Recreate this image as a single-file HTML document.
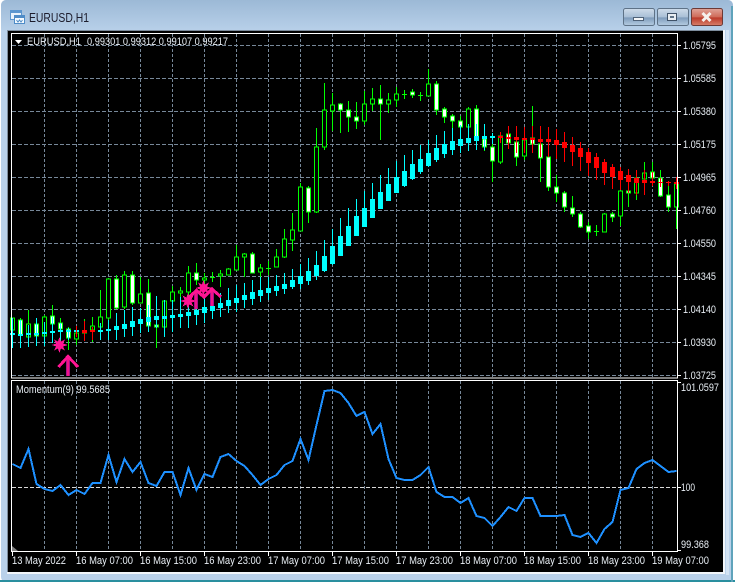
<!DOCTYPE html>
<html><head><meta charset="utf-8"><title>EURUSD,H1</title>
<style>
html,body{margin:0;padding:0;background:#fff;width:735px;height:582px;overflow:hidden}
svg{display:block}
text{font-family:"Liberation Sans",sans-serif;font-size:11px;fill:#e8eef4}
</style></head><body>
<svg width="735" height="582" viewBox="0 0 735 582" xmlns="http://www.w3.org/2000/svg">
<defs>
<linearGradient id="tb" x1="0" y1="0" x2="0" y2="1"><stop offset="0" stop-color="#9cb9d6"/><stop offset="1" stop-color="#b9d1ea"/></linearGradient>
<linearGradient id="btn" x1="0" y1="0" x2="0" y2="1"><stop offset="0" stop-color="#cfdcea"/><stop offset=".5" stop-color="#a9bfd6"/><stop offset=".55" stop-color="#7f9cbb"/><stop offset="1" stop-color="#b5cde2"/></linearGradient>
<linearGradient id="cls" x1="0" y1="0" x2="0" y2="1"><stop offset="0" stop-color="#e0a59a"/><stop offset=".5" stop-color="#cf6a58"/><stop offset=".55" stop-color="#bb3a2a"/><stop offset="1" stop-color="#d8806c"/></linearGradient>
</defs>
<!-- window frame -->
<rect x="0" y="0" width="735" height="582" fill="#ffffff"/>
<rect x="1" y="0" width="732" height="582" rx="5" fill="#b9d1ea"/>
<rect x="1" y="0" width="732" height="32" rx="5" fill="url(#tb)"/>
<rect x="0" y="580" width="735" height="2" fill="#2a8f9f"/>
<rect x="731" y="6" width="2" height="576" fill="#5fa3bb"/>
<rect x="726" y="30" width="3" height="545" fill="#d3e3f3"/>
<rect x="7" y="30" width="718" height="544" fill="#f2f6fa"/>
<rect x="7" y="30" width="716" height="1" fill="#7d8c9c"/>
<rect x="7" y="30" width="1" height="542" fill="#7d8c9c"/>
<rect x="8" y="31" width="715" height="541" fill="#000"/>
<!-- title icon -->
<rect x="10.500" y="10.500" width="11" height="9" fill="#e8f2fb" stroke="#5b96cf"/>
<rect x="11" y="11" width="10" height="2" fill="#5b96cf"/>
<rect x="14.500" y="15.500" width="10" height="8" fill="#f6fbff" stroke="#4f8cc7"/>
<rect x="15" y="16" width="9" height="2" fill="#4f8cc7"/>
<path d="M16.500 20l1.500 2 1.500-2 1.500 2 1.500-2" fill="none" stroke="#4f8cc7"/>
<text x="29" y="22" textLength="60" lengthAdjust="spacingAndGlyphs" style="font-size:13px;fill:#1c1c2c">EURUSD,H1</text>
<!-- buttons -->
<rect x="623.500" y="8.500" width="31" height="17" rx="2" fill="url(#btn)" stroke="#5e7287"/>
<rect x="633.500" y="17.500" width="10" height="3" fill="#f4f6f8" stroke="#4f6278"/>
<rect x="657.500" y="8.500" width="31" height="17" rx="2" fill="url(#btn)" stroke="#5e7287"/>
<rect x="667.500" y="13.500" width="9" height="7" fill="#e8edf2" stroke="#3f5268"/>
<rect x="670" y="16" width="4" height="2" fill="#5e7287"/>
<rect x="691.500" y="8.500" width="31" height="17" rx="2" fill="url(#cls)" stroke="#6d3a36"/>
<path d="M702.500 13l8 8M710.500 13l-8 8" stroke="#f5f1ee" stroke-width="3" fill="none"/>
<!-- grid -->
<g shape-rendering="crispEdges" fill="none">
<path stroke="#778899" stroke-dasharray="4 2" d="M12 45.500H677M12 78.500H677M12 111.500H677M12 144.500H677M12 177.500H677M12 210.500H677M12 243.500H677M12 276.500H677M12 309.500H677M12 342.500H677M12 375.500H677"/>
<path stroke="#778899" stroke-dasharray="3 2" d="M44.500 34V378M76.500 34V378M108.500 34V378M140.500 34V378M172.500 34V378M204.500 34V378M236.500 34V378M268.500 34V378M300.500 34V378M332.500 34V378M364.500 34V378M396.500 34V378M428.500 34V378M460.500 34V378M492.500 34V378M524.500 34V378M556.500 34V378M588.500 34V378M620.500 34V378M652.500 34V378"/>
<path stroke="#778899" stroke-dasharray="3 2" d="M44.500 381V551M76.500 381V551M108.500 381V551M140.500 381V551M172.500 381V551M204.500 381V551M236.500 381V551M268.500 381V551M300.500 381V551M332.500 381V551M364.500 381V551M396.500 381V551M428.500 381V551M460.500 381V551M492.500 381V551M524.500 381V551M556.500 381V551M588.500 381V551M620.500 381V551M652.500 381V551"/>
<path stroke="#d8d8d8" stroke-dasharray="4 2" d="M12 487.500H677"/>
<!-- green wicks -->
<path stroke="#00ff00" d="M12.500 318V332M20.500 318V337M28.500 310V338M36.500 318V337M44.500 315V337M52.500 305V325M60.500 318V332M68.500 327V350M76.500 330V345M84.500 319V335M92.500 317V342M100.500 290V327M108.500 278V320M116.500 275V309M124.500 271V309M132.500 271V305M140.500 277V303M148.500 279V332M156.500 296V348M164.500 301V337M172.500 286V303M180.500 287V313M188.500 266V297M196.500 263V285M204.500 273V290M212.500 272V282M220.500 270V287M228.500 268V275M236.500 245V270M244.500 253V277M252.500 252V273M260.500 264V285M268.500 261V275M276.500 249V267M284.500 229V258M292.500 213V251M300.500 183V231M308.500 186V223M316.500 128V213M324.500 83V150M332.500 93V131M340.500 103V133M348.500 101V132M356.500 102V129M364.500 91V125M372.500 88V111M380.500 85V140M388.500 93V113M396.500 87V107M404.500 90V99M412.500 89V98M420.500 92V101M428.500 69V96M436.500 81V115M444.500 107V123M452.500 114V128M460.500 116V133M468.500 107V133M476.500 105V148M484.500 130V151M492.500 137V182M500.500 132V164M508.500 126V145M516.500 134V166M524.500 135V160M532.500 106V153M540.500 140V182M548.500 150V191M556.500 175V202M564.500 191V212M572.500 196V217M580.500 212V228M588.500 222V239M596.500 225V236M604.500 213V232M612.500 212V222M620.500 188V226M628.500 169V207M636.500 170V200M644.500 162V185M652.500 162V180M660.500 170V197M668.500 182V212M676.500 180V229"/>
<!-- green crosses -->
<path stroke="#00ff00" d="M210 277.500H215M266 268.500H271M402 94.500H407M418 95.500H423M594 231.500H599"/>
<!-- hollow -->
<path stroke="#00ff00" fill="#000" d="M10.500 318h4v12h-4zM26.500 324h4v13h-4zM42.500 317h4v19h-4zM74.500 333h4v6h-4zM82.500 331h4v2h-4zM90.500 326h4v4h-4zM98.500 317h4v10h-4zM106.500 279h4v39h-4zM122.500 275h4v32h-4zM138.500 294h4v9h-4zM162.500 301h4v26h-4zM170.500 292h4v9h-4zM178.500 291h4v2h-4zM186.500 273h4v19h-4zM202.500 278h4v2h-4zM218.500 274h4v2h-4zM226.500 269h4v6h-4zM234.500 257h4v13h-4zM242.500 254h4v3h-4zM258.500 268h4v4h-4zM274.500 257h4v10h-4zM282.500 239h4v18h-4zM290.500 230h4v10h-4zM298.500 187h4v44h-4zM314.500 147h4v65h-4zM322.500 110h4v37h-4zM330.500 105h4v6h-4zM362.500 104h4v17h-4zM370.500 99h4v5h-4zM386.500 100h4v4h-4zM394.500 94h4v6h-4zM426.500 84h4v12h-4zM466.500 109h4v18h-4zM498.500 136h4v26h-4zM522.500 140h4v16h-4zM602.500 214h4v18h-4zM618.500 191h4v25h-4zM634.500 178h4v15h-4zM642.500 173h4v6h-4zM674.500 184h4v23h-4z"/>
<!-- white -->
<path stroke="#00ff00" fill="#fff" d="M18.500 320h4v15h-4zM34.500 324h4v12h-4zM50.500 316h4v8h-4zM58.500 323h4v6h-4zM66.500 329h4v9h-4zM114.500 279h4v29h-4zM130.500 275h4v28h-4zM146.500 293h4v33h-4zM154.500 325h4v2h-4zM194.500 273h4v7h-4zM250.500 254h4v19h-4zM306.500 188h4v24h-4zM338.500 104h4v6h-4zM346.500 110h4v7h-4zM354.500 117h4v4h-4zM378.500 99h4v5h-4zM410.500 92h4v3h-4zM434.500 84h4v26h-4zM442.500 109h4v8h-4zM450.500 116h4v5h-4zM458.500 121h4v6h-4zM474.500 109h4v31h-4zM482.500 139h4v8h-4zM490.500 147h4v14h-4zM506.500 134h4v9h-4zM514.500 142h4v15h-4zM530.500 138h4v6h-4zM538.500 144h4v14h-4zM546.500 157h4v30h-4zM554.500 187h4v6h-4zM562.500 193h4v14h-4zM570.500 208h4v6h-4zM578.500 214h4v13h-4zM586.500 226h4v6h-4zM610.500 214h4v3h-4zM626.500 191h4v2h-4zM650.500 172h4v6h-4zM658.500 178h4v18h-4zM666.500 195h4v12h-4z"/>
<!-- cyan wicks -->
<path stroke="#00ffff" d="M12.500 318V348M20.500 320V348M28.500 325V347M36.500 318V346M44.500 322V346M52.500 317V343M60.500 323V345M68.500 328V340M100.500 323V340M108.500 320V340M116.500 313V340M124.500 310V337M132.500 307V336M140.500 308V333M148.500 305V332M156.500 296V328M164.500 300V337M172.500 300V332M180.500 297V328M188.500 302V328M196.500 295V325M204.500 295V323M212.500 290V319M220.500 293V317M228.500 288V313M236.500 285V312M244.500 283V308M252.500 280V305M260.500 277V302M268.500 277V300M276.500 275V296M284.500 273V294M292.500 269V289M300.500 264V289M308.500 258V285M316.500 251V280M324.500 240V272M332.500 229V265M340.500 218V256M348.500 208V246M356.500 199V236M364.500 191V227M372.500 183V218M380.500 175V209M388.500 168V201M396.500 161V193M404.500 155V187M412.500 150V180M420.500 145V174M428.500 140V167M436.500 135V162M444.500 131V158M452.500 128V155M460.500 125V153M468.500 124V151M476.500 124V150M484.500 124V150M492.500 133V144"/>
<path fill="#00ffff" d="M10 333h5v2h-5zM18 334h5v2h-5zM26 333h5v2h-5zM34 333h5v2h-5zM42 332h5v2h-5zM50 331h5v2h-5zM58 330h5v2h-5zM66 330h5v2h-5zM74 330h5v2h-5zM98 330h5v2h-5zM106 329h5v2h-5zM114 326h5v4h-5zM122 324h5v5h-5zM130 321h5v6h-5zM138 319h5v5h-5zM146 317h5v5h-5zM154 316h5v4h-5zM162 316h5v3h-5zM170 315h5v3h-5zM178 314h5v3h-5zM186 312h5v4h-5zM194 310h5v5h-5zM202 307h5v6h-5zM210 306h5v5h-5zM218 303h5v5h-5zM226 300h5v6h-5zM234 298h5v5h-5zM242 295h5v5h-5zM250 292h5v7h-5zM258 290h5v6h-5zM266 288h5v5h-5zM274 286h5v5h-5zM282 284h5v5h-5zM290 280h5v7h-5zM298 276h5v8h-5zM306 271h5v10h-5zM314 265h5v11h-5zM322 256h5v15h-5zM330 246h5v18h-5zM338 236h5v20h-5zM346 226h5v20h-5zM354 216h5v20h-5zM362 208h5v19h-5zM370 199h5v19h-5zM378 192h5v17h-5zM386 184h5v17h-5zM394 177h5v16h-5zM402 171h5v15h-5zM410 164h5v15h-5zM418 159h5v13h-5zM426 153h5v13h-5zM434 148h5v12h-5zM442 144h5v10h-5zM450 141h5v9h-5zM458 139h5v7h-5zM466 138h5v5h-5zM474 136h5v5h-5zM482 136h5v3h-5zM490 136h5v2h-5z"/>
<!-- red -->
<path stroke="#ff0000" d="M76.500 326V337M84.500 321V341M92.500 327V340M500.500 132V143M508.500 126V149M516.500 126V153M524.500 127V153M532.500 126V153M540.500 126V157M548.500 127V157M556.500 129V159M564.500 132V162M572.500 137V166M580.500 142V171M588.500 148V176M596.500 153V180M604.500 159V185M612.500 164V189M620.500 167V190M628.500 169V193M636.500 170V195M644.500 170V195M652.500 172V186M660.500 178V187M668.500 181V186M676.500 177V189"/>
<path fill="#ff0000" d="M82 330h5v3h-5zM90 330h5v2h-5zM498 136h5v2h-5zM506 137h5v2h-5zM514 137h5v3h-5zM522 138h5v2h-5zM530 138h5v2h-5zM538 139h5v3h-5zM546 139h5v3h-5zM554 140h5v5h-5zM562 142h5v6h-5zM570 145h5v7h-5zM578 148h5v9h-5zM586 152h5v11h-5zM594 157h5v11h-5zM602 162h5v11h-5zM610 167h5v10h-5zM618 171h5v9h-5zM626 175h5v7h-5zM634 178h5v5h-5zM642 180h5v3h-5zM650 181h5v2h-5zM658 182h5v1h-5zM666 182h5v1h-5zM674 182h5v2h-5z"/>
</g>
<!-- pink signals -->
<g shape-rendering="crispEdges">
<path d="M68 357V376M196 291V309M212 290V306" stroke="#a8108c" stroke-width="4" fill="none"/>
<path d="M68 357V376M196 291V309M212 290V306" stroke="#f01488" stroke-width="2" fill="none"/>
<path d="M58.500 367L68 356.500 78 367M188 298L196.500 290.500 205 298M204 297L212 289 221 297" stroke="#ff1493" stroke-width="3" fill="none"/>
<polygon transform="translate(59.500 345)" fill="#ff1493" points="0,-8 1.500,-3.500 5.600,-5.600 3.500,-1.500 8,0 3.500,1.500 5.600,5.600 1.500,3.500 0,8 -1.500,3.500 -5.600,5.600 -3.500,1.500 -8,0 -3.500,-1.500 -5.600,-5.600 -1.500,-3.500"/>
<polygon transform="translate(188 301)" fill="#ff1493" points="0,-8 1.500,-3.500 5.600,-5.600 3.500,-1.500 8,0 3.500,1.500 5.600,5.600 1.500,3.500 0,8 -1.500,3.500 -5.600,5.600 -3.500,1.500 -8,0 -3.500,-1.500 -5.600,-5.600 -1.500,-3.500"/>
<polygon transform="translate(203.500 288)" fill="#ff1493" points="0,-8 1.500,-3.500 5.600,-5.600 3.500,-1.500 8,0 3.500,1.500 5.600,5.600 1.500,3.500 0,8 -1.500,3.500 -5.600,5.600 -3.500,1.500 -8,0 -3.500,-1.500 -5.600,-5.600 -1.500,-3.500"/>
</g>
<!-- momentum -->
<polyline shape-rendering="crispEdges" fill="none" stroke="#1e90ff" stroke-width="2" points="12.500,464 20.500,468 28.500,449 36.500,484 44.500,489 52.500,491 60.500,485 68.500,495 76.500,490 84.500,494 92.500,483 100.500,483 108.500,455 116.500,482 124.500,459 132.500,472 140.500,462 148.500,483 156.500,486 164.500,472 172.500,472 180.500,495 188.500,468 196.500,490 204.500,474 212.500,477 220.500,457 228.500,454 236.500,461 244.500,466 252.500,475 260.500,485 268.500,479 276.500,475 284.500,465 292.500,461 300.500,439 308.500,460 316.500,425 324.500,391 332.500,390 340.500,393 348.500,403 356.500,416 364.500,412 372.500,434 380.500,424 388.500,459 396.500,478 404.500,480 412.500,480 420.500,475 428.500,467 436.500,492 444.500,497 452.500,497 460.500,503 468.500,498 476.500,516 484.500,518 492.500,526 500.500,517 508.500,507 516.500,511 524.500,498 532.500,498 540.500,516 548.500,516 556.500,516 564.500,515 572.500,535 580.500,537 588.500,533 596.500,543 604.500,529 612.500,522 620.500,490 628.500,488 636.500,469 644.500,463 652.500,460 660.500,466 668.500,472 676.500,471"/>
<!-- pane frames -->
<g shape-rendering="crispEdges" fill="none" stroke="#fff">
<rect x="11.500" y="33.500" width="666" height="344.500"/>
<rect x="11.500" y="380.500" width="666" height="171"/>
<path d="M678 45.500h3M678 78.500h3M678 111.500h3M678 144.500h3M678 177.500h3M678 210.500h3M678 243.500h3M678 276.500h3M678 309.500h3M678 342.500h3M678 375.500h3M678 382.500h3M678 487.500h3M678 550.500h3M12.500 552v4M76.500 552v4M140.500 552v4M204.500 552v4M268.500 552v4M332.500 552v4M396.500 552v4M460.500 552v4M524.500 552v4M588.500 552v4M652.500 552v4"/>
</g>
<polygon points="12,546 12,551 18,551" fill="#808080"/>
<polygon points="15,40 22,40 18.500,44" fill="#fff"/>
<!-- labels -->
<text x="27" y="45" textLength="54" lengthAdjust="spacingAndGlyphs">EURUSD,H1</text>
<text x="87" y="45" textLength="141" lengthAdjust="spacingAndGlyphs">0.99301 0.99312 0.99107 0.99217</text>
<text x="16" y="393" textLength="94" lengthAdjust="spacingAndGlyphs">Momentum(9) 99.5685</text>
<text x="683" y="49" textLength="33" lengthAdjust="spacingAndGlyphs">1.05795</text>
<text x="683" y="82" textLength="33" lengthAdjust="spacingAndGlyphs">1.05585</text>
<text x="683" y="115" textLength="33" lengthAdjust="spacingAndGlyphs">1.05380</text>
<text x="683" y="148" textLength="33" lengthAdjust="spacingAndGlyphs">1.05175</text>
<text x="683" y="181" textLength="33" lengthAdjust="spacingAndGlyphs">1.04965</text>
<text x="683" y="214" textLength="33" lengthAdjust="spacingAndGlyphs">1.04760</text>
<text x="683" y="247" textLength="33" lengthAdjust="spacingAndGlyphs">1.04550</text>
<text x="683" y="280" textLength="33" lengthAdjust="spacingAndGlyphs">1.04345</text>
<text x="683" y="313" textLength="33" lengthAdjust="spacingAndGlyphs">1.04140</text>
<text x="683" y="346" textLength="33" lengthAdjust="spacingAndGlyphs">1.03930</text>
<text x="683" y="379" textLength="33" lengthAdjust="spacingAndGlyphs">1.03725</text>
<text x="681" y="391" textLength="38" lengthAdjust="spacingAndGlyphs">101.0597</text>
<text x="681" y="491" textLength="14" lengthAdjust="spacingAndGlyphs">100</text>
<text x="681" y="548" textLength="28" lengthAdjust="spacingAndGlyphs">99.368</text>
<text x="12" y="564" textLength="54" lengthAdjust="spacingAndGlyphs">13 May 2022</text>
<text x="76" y="564" textLength="57" lengthAdjust="spacingAndGlyphs">16 May 07:00</text>
<text x="140" y="564" textLength="57" lengthAdjust="spacingAndGlyphs">16 May 15:00</text>
<text x="204" y="564" textLength="57" lengthAdjust="spacingAndGlyphs">16 May 23:00</text>
<text x="268" y="564" textLength="57" lengthAdjust="spacingAndGlyphs">17 May 07:00</text>
<text x="332" y="564" textLength="57" lengthAdjust="spacingAndGlyphs">17 May 15:00</text>
<text x="396" y="564" textLength="57" lengthAdjust="spacingAndGlyphs">17 May 23:00</text>
<text x="460" y="564" textLength="57" lengthAdjust="spacingAndGlyphs">18 May 07:00</text>
<text x="524" y="564" textLength="57" lengthAdjust="spacingAndGlyphs">18 May 15:00</text>
<text x="588" y="564" textLength="57" lengthAdjust="spacingAndGlyphs">18 May 23:00</text>
<text x="652" y="564" textLength="57" lengthAdjust="spacingAndGlyphs">19 May 07:00</text>
</svg>
</body></html>
